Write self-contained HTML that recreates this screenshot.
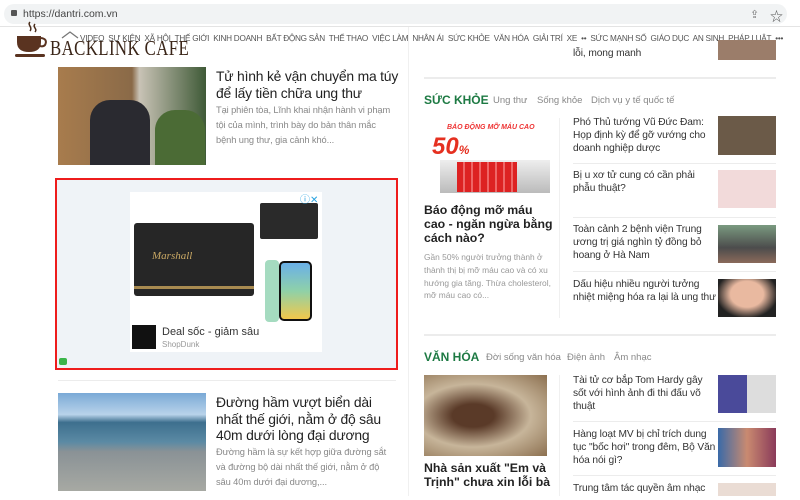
<!DOCTYPE html>
<html><head><meta charset="utf-8"><style>
*{margin:0;padding:0;box-sizing:border-box}
body{width:800px;height:500px;overflow:hidden;background:#fff;font-family:"Liberation Sans","Noto Sans CJK SC",sans-serif;position:relative;color:#222}
.a{position:absolute}
.nav{font-size:8.2px;color:#555;white-space:nowrap;letter-spacing:-.25px}
.t{font-size:13.9px;line-height:16.5px;color:#222;font-weight:500;letter-spacing:-.2px}
.s{font-size:9.3px;line-height:15px;color:#888;letter-spacing:-.1px}
.ri{font-size:10.2px;line-height:12.8px;color:#333;width:143px;letter-spacing:-.1px}
.hr{height:1px;background:#ececec}
.sec{font-size:12px;font-weight:bold;color:#1d7a43}
.sub{font-size:9.5px;color:#888}
</style></head><body>
<div class="a" style="left:4px;top:4px;width:783px;height:20px;border-radius:10px;background:#f1f3f4"></div>
<div class="a" style="left:11px;top:10px;width:6px;height:6px;background:#555;border-radius:1px"></div>
<div class="a" style="left:23px;top:8px;font-size:10.5px;color:#444">https://dantri.com.vn</div>
<div class="a" style="left:750px;top:8px;font-size:11px;color:#777">⇪</div>
<div class="a" style="left:770px;top:6px;font-size:13px;color:#555">☆</div>
<div class="a" style="left:0;top:26px;width:800px;height:1px;background:#e4e4e4"></div>
<div class="a nav" style="left:80px;top:34px">VIDEO&nbsp; SỰ KIỆN&nbsp; XÃ HỘI&nbsp; THẾ GIỚI&nbsp; KINH DOANH&nbsp; BẤT ĐỘNG SẢN&nbsp; THỂ THAO&nbsp; VIỆC LÀM&nbsp; NHÂN ÁI&nbsp; SỨC KHỎE&nbsp; VĂN HÓA&nbsp; GIẢI TRÍ&nbsp; XE&nbsp; ••&nbsp; SỨC MẠNH SỐ&nbsp; GIÁO DỤC&nbsp; AN SINH&nbsp; PHÁP LUẬT&nbsp; •••</div>
<svg class="a" style="left:60px;top:30px" width="20" height="14"><path d="M2 8 L10 2 L18 8" stroke="#777" fill="none" stroke-width="1.3"/></svg>
<svg class="a" style="left:14px;top:20px" width="36" height="40"><path d="M16 2c-3 3 3 5 0 9M21 4c-3 3 3 5 0 8" stroke="#4a2c1a" fill="none" stroke-width="1.5"/><path d="M3 16 H27 V22 Q27 32 15 32 Q3 32 3 22Z" fill="#5a3320"/><path d="M27 18 Q34 19 31 25 Q29 27 26 26" stroke="#5a3320" fill="none" stroke-width="2"/><rect x="1" y="34" width="30" height="3" rx="1.5" fill="#5a3320"/></svg>
<div class="a" style="left:50px;top:36px;font-family:'Liberation Serif',serif;font-size:21px;color:#3a2518;transform:scaleX(.8);transform-origin:left;letter-spacing:.5px;white-space:nowrap">BACKLINK CAFE</div>

<div class="a" style="left:58px;top:67px;width:148px;height:98px;background:linear-gradient(90deg,#a87c4d 0,#8a6a48 50%,#c9c3b6 55%,#3f5a37 100%)"></div>
<div class="a" style="left:90px;top:100px;width:60px;height:65px;background:#2a2a30;border-radius:20px 20px 0 0"></div>
<div class="a" style="left:155px;top:110px;width:50px;height:55px;background:#4b6b35;border-radius:20px 20px 0 0"></div>
<div class="a t" style="left:216px;top:68px;width:185px">Tử hình kẻ vận chuyển ma túy để lấy tiền chữa ung thư</div>
<div class="a s" style="left:216px;top:103px;width:178px">Tại phiên tòa, Lĩnh khai nhận hành vi phạm tội của mình, trình bày do bản thân mắc bệnh ung thư, gia cảnh khó...</div>

<div class="a" style="left:55px;top:178px;width:343px;height:192px;border:2px solid #ee1c1c;background:#eff3f7"></div>
<div class="a" style="left:130px;top:192px;width:192px;height:160px;background:#fff"></div>
<div class="a" style="left:134px;top:223px;width:120px;height:73px;background:#262626;border-radius:3px"></div>
<div class="a" style="left:152px;top:250px;font-family:'Liberation Serif',serif;font-style:italic;font-size:11px;color:#c9a864">Marshall</div>
<div class="a" style="left:134px;top:286px;width:120px;height:3px;background:#a88a50"></div>
<div class="a" style="left:260px;top:203px;width:58px;height:36px;background:#2a2a2a;border-radius:2px"></div>
<div class="a" style="left:279px;top:261px;width:33px;height:60px;background:linear-gradient(#6ab0e8,#8fd1a8 50%,#f2c84b);border:2px solid #111;border-radius:5px"></div>
<div class="a" style="left:265px;top:260px;width:14px;height:62px;background:#a5dbc0;border-radius:4px"></div>
<div class="a" style="left:300px;top:191px;font-size:10px;color:#29a3e0">ⓘ✕</div>
<div class="a" style="left:132px;top:325px;width:24px;height:24px;background:#111"></div>
<div class="a" style="left:162px;top:326px;font-size:11px;color:#333">Deal sốc - giảm sâu</div>
<div class="a" style="left:162px;top:340px;font-size:8px;color:#999">ShopDunk</div>
<div class="a" style="left:59px;top:358px;width:8px;height:7px;background:#3bb54a;border-radius:2px"></div>
<div class="a hr" style="left:58px;top:380px;width:338px"></div>

<div class="a" style="left:58px;top:393px;width:148px;height:98px;background:linear-gradient(#7aa9d6 0,#b9d3ea 22%,#3d6f8e 30%,#5b8aa4 50%,#8a9296 60%,#a7a9a3 100%)"></div>
<div class="a t" style="left:216px;top:394px;width:185px">Đường hầm vượt biển dài nhất thế giới, nằm ở độ sâu 40m dưới lòng đại dương</div>
<div class="a s" style="left:216px;top:445px;width:178px">Đường hầm là sự kết hợp giữa đường sắt và đường bộ dài nhất thế giới, nằm ở độ sâu 40m dưới đại dương,...</div>

<div class="a" style="left:408px;top:27px;width:1px;height:473px;background:#f0f0f0"></div>
<div class="a ri" style="left:573px;top:48px">lỗi, mong manh</div>
<div class="a" style="left:718px;top:40px;width:58px;height:20px;background:#9b7d6a"></div>
<div class="a hr" style="left:424px;top:77px;width:352px;height:2px"></div>
<div class="a sec" style="left:424px;top:93px">SỨC KHỎE</div>
<div class="a sub" style="left:493px;top:95px">Ung thư</div>
<div class="a sub" style="left:537px;top:95px">Sống khỏe</div>
<div class="a sub" style="left:591px;top:95px">Dịch vụ y tế quốc tế</div>
<div class="a" style="left:447px;top:124px;font-size:7px;font-weight:bold;font-style:italic;color:#e33">BÁO ĐỘNG MỠ MÁU CAO</div>
<div class="a" style="left:432px;top:133px;font-size:24px;font-weight:bold;font-style:italic;color:#e53020">50<span style="font-size:12px">%</span></div>
<div class="a" style="left:440px;top:160px;width:110px;height:33px;background:linear-gradient(#eee,#bbb)"></div>
<div class="a" style="left:457px;top:162px;width:60px;height:30px;background:repeating-linear-gradient(90deg,#d22 0 6px,#e66 6px 8px)"></div>
<div class="a" style="left:424px;top:203px;width:132px;font-size:12.3px;line-height:14px;font-weight:bold;color:#222">Báo động mỡ máu cao - ngăn ngừa bằng cách nào?</div>
<div class="a" style="left:424px;top:251px;width:130px;font-size:8.4px;line-height:12.8px;color:#999">Gần 50% người trưởng thành ở thành thị bị mỡ máu cao và có xu hướng gia tăng. Thừa cholesterol, mỡ máu cao có...</div>
<div class="a" style="left:559px;top:118px;width:1px;height:200px;background:#f0f0f0"></div>

<div class="a ri" style="left:573px;top:117px">Phó Thủ tướng Vũ Đức Đam: Họp định kỳ để gỡ vướng cho doanh nghiệp dược</div>
<div class="a" style="left:718px;top:116px;width:58px;height:39px;background:#6b5a48"></div>
<div class="a hr" style="left:573px;top:163px;width:203px"></div>
<div class="a ri" style="left:573px;top:170px">Bị u xơ tử cung có cần phải phẫu thuật?</div>
<div class="a" style="left:718px;top:170px;width:58px;height:38px;background:#f2dada"></div>
<div class="a hr" style="left:573px;top:217px;width:203px"></div>
<div class="a ri" style="left:573px;top:224px">Toàn cảnh 2 bệnh viện Trung ương trị giá nghìn tỷ đồng bỏ hoang ở Hà Nam</div>
<div class="a" style="left:718px;top:225px;width:58px;height:38px;background:linear-gradient(#7a9a80,#4c4c4c 60%,#8a6a5a)"></div>
<div class="a hr" style="left:573px;top:271px;width:203px"></div>
<div class="a ri" style="left:573px;top:279px">Dấu hiệu nhiều người tưởng nhiệt miệng hóa ra lại là ung thư</div>
<div class="a" style="left:718px;top:279px;width:58px;height:38px;background:radial-gradient(ellipse at 50% 40%,#e9b9a0 40%,#222 75%)"></div>

<div class="a hr" style="left:424px;top:334px;width:352px;height:2px"></div>
<div class="a sec" style="left:424px;top:350px">VĂN HÓA</div>
<div class="a sub" style="left:486px;top:352px">Đời sống văn hóa</div>
<div class="a sub" style="left:567px;top:352px">Điện ảnh</div>
<div class="a sub" style="left:614px;top:352px">Âm nhạc</div>
<div class="a" style="left:424px;top:375px;width:123px;height:81px;background:radial-gradient(ellipse at 40% 50%,#5a3a28 20%,#c7b59a 55%,#8c7050 100%)"></div>
<div class="a" style="left:424px;top:461px;width:132px;font-size:12.3px;line-height:14px;font-weight:bold;color:#222">Nhà sản xuất "Em và Trịnh" chưa xin lỗi bà</div>
<div class="a" style="left:559px;top:375px;width:1px;height:125px;background:#f0f0f0"></div>
<div class="a ri" style="left:573px;top:375px">Tài tử cơ bắp Tom Hardy gây sốt với hình ảnh đi thi đấu võ thuật</div>
<div class="a" style="left:718px;top:375px;width:58px;height:38px;background:linear-gradient(90deg,#4a4a9a 50%,#ddd 50%)"></div>
<div class="a hr" style="left:573px;top:421px;width:203px"></div>
<div class="a ri" style="left:573px;top:429px">Hàng loạt MV bị chỉ trích dung tục "bốc hơi" trong đêm, Bộ Văn hóa nói gì?</div>
<div class="a" style="left:718px;top:428px;width:58px;height:39px;background:linear-gradient(90deg,#3a6aa8,#c98a70,#8a3a5a)"></div>
<div class="a hr" style="left:573px;top:475px;width:203px"></div>
<div class="a ri" style="left:573px;top:483px">Trung tâm tác quyền âm nhạc</div>
<div class="a" style="left:718px;top:483px;width:58px;height:13px;background:#eadcd4"></div>
<div class="a" style="left:0;top:496px;width:800px;height:4px;background:#fff"></div>
</body></html>
